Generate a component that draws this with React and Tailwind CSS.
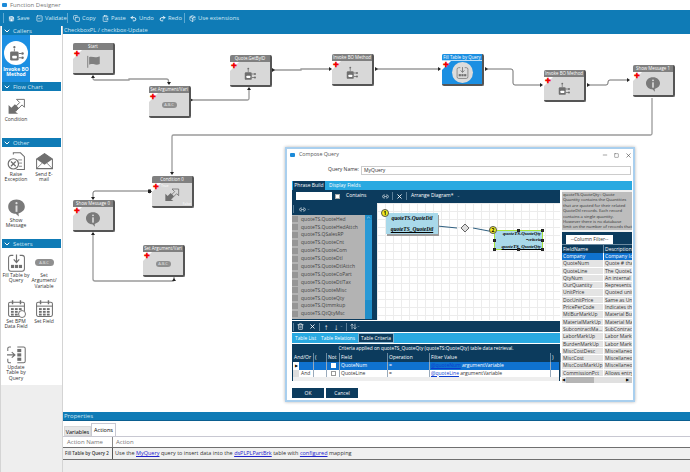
import React from "react";
import { Save, SquareCheck, Copy, ClipboardPaste, Undo2, Redo2, PackageCheck, ChevronDown, Link2, X, ArrowUpDown, Square, Minus, ChevronUp, Trash2 } from "lucide-react";

const G = "#6f6f6f";

function InvokeIcon({ c = G, s = 20 }) {
  return (
    <svg viewBox="0 0 24 24" width={s} height={s}>
      <circle cx="9" cy="3" r="1.6" fill={c} />
      <path d="M9 5v4" stroke={c} strokeWidth="1.2" />
      <rect x="3" y="9" width="12" height="13" rx="2" fill={c} />
      <rect x="6" y="15" width="6.5" height="4" rx="1" fill="#fff" />
      <path d="M15 12h4M15 18h4" stroke={c} strokeWidth="1.4" />
      <circle cx="20.5" cy="12" r="1.8" fill={c} />
      <circle cx="20.5" cy="18" r="1.8" fill={c} />
    </svg>
  );
}
function FlagIcon({ c = "#7f7f7f", s = 20 }) {
  return (
    <svg viewBox="0 0 24 24" width={s} height={s}>
      <rect x="2" y="3" width="1.6" height="19" fill={c} />
      <path d="M5 5c4-2 8 1 12 0 2 0 4-1 5-1v12c-4 2-7 1-10 0-3 0-5 0-7 1z" fill={c} />
    </svg>
  );
}
function InfoIcon({ c = "#7a7a7a", s = 20 }) {
  return (
    <svg viewBox="0 0 24 24" width={s} height={s}>
      <path d="M12 2C5.5 2 1.5 6 1.5 11s4 9 9.5 9l4 3.5-.5-4c4-1.2 8-4 8-8.5 0-5-4.5-9-10.5-9z" fill={c} />
      <circle cx="12" cy="6.5" r="1.4" fill="#ddd" />
      <rect x="10.8" y="9.5" width="2.4" height="8" fill="#ddd" />
    </svg>
  );
}
function CondIcon({ c = G, s = 20 }) {
  return (
    <svg viewBox="0 0 24 24" width={s} height={s}>
      <path d="M12 3h10v10l-3-3-8 8-3-3 8-8z" fill="none" stroke={c} strokeWidth="1.2" />
      <path d="M2 21V10l3.5 3.5L10 9l5 5-4.5 4.5L14 21z" fill={c} />
    </svg>
  );
}
function FillIcon({ c = G, s = 20 }) {
  return (
    <svg viewBox="0 0 24 24" width={s} height={s}>
      <path d="M8 3H5a3 3 0 0 0-3 3v14a3 3 0 0 0 3 3h14a3 3 0 0 0 3-3V6a3 3 0 0 0-3-3h-3" fill="none" stroke={c} strokeWidth="1.3" />
      <path d="M12 2v9M8.500 8l3.500 4 3.500-4" fill="none" stroke={c} strokeWidth="1.5" />
      <rect x="5" y="15" width="4" height="4" fill={c} />
      <rect x="10" y="15" width="4" height="4" fill={c} />
      <rect x="15" y="15" width="4" height="4" fill={c} />
    </svg>
  );
}
function CalIcon({ c = G, s = 20, extra }) {
  return (
    <svg viewBox="0 0 24 24" width={s} height={s}>
      <rect x="2" y="4" width="20" height="18" rx="2" fill="none" stroke={c} strokeWidth="1.3" />
      <path d="M7 1.500v5M17 1.500v5" stroke={c} strokeWidth="1.8" />
      <path d="M2 9h20" stroke={c} strokeWidth="1.3" />
      {[11.5, 15, 18.5].map((y) => [5, 10, 15].map((x) => <rect key={`${x}-${y}`} x={x} y={y} width="3.5" height="2.4" fill={c} />))}
      {extra && <circle cx="19" cy="19" r="4.4" fill="#fff" stroke={c} strokeWidth="1.2" />}
    </svg>
  );
}
function UpdateIcon({ c = G, s = 20 }) {
  return (
    <svg viewBox="0 0 24 24" width={s} height={s}>
      <path d="M5 2.500H3a2 2 0 0 0-2 2v3M5 22.500H3a2 2 0 0 1-2-2v-3M13 2.500h8a2 2 0 0 1 2 2v16a2 2 0 0 1-2 2h-8" fill="none" stroke={c} strokeWidth="1.3" />
      <path d="M0 12.500h9M6 9l4 3.500-4 3.500" fill="none" stroke={c} strokeWidth="1.5" />
      <rect x="13" y="5" width="5" height="4" fill={c} />
      <rect x="13" y="10.5" width="5" height="4" fill={c} />
      <rect x="13" y="16" width="5" height="4" fill={c} />
    </svg>
  );
}
function RaiseIcon({ c = G, s = 20 }) {
  return (
    <svg viewBox="0 0 24 24" width={s} height={s}>
      <path d="M8 3V1h9l5 5v16H12" fill="none" stroke={c} strokeWidth="1.3" />
      <circle cx="8" cy="15" r="6.500" fill="none" stroke={c} strokeWidth="1.5" />
      <path d="M5 12l6 6M11 12l-6 6" stroke={c} strokeWidth="1.6" />
      <path d="M14 10h5M15 14h4M15 18h4" stroke={c} strokeWidth="1" />
    </svg>
  );
}
function MailIcon({ c = G, s = 20 }) {
  return (
    <svg viewBox="0 0 24 24" width={s} height={s}>
      <path d="M12 2L2 9v12h20V9z" fill="none" stroke={c} strokeWidth="1.3" />
      <path d="M12 2L2 9l10 7 10-7z" fill={c} />
      <path d="M2 21l7-7M22 21l-7-7" stroke={c} strokeWidth="1" />
    </svg>
  );
}
function Pill({ w = 15, h = 6, cls = "bg-[#8f8f8f]" }) {
  return (
    <span style={{ width: w, height: h }} className={`${cls} rounded-full flex items-center justify-center text-[#e6e6e6] text-[4px] leading-none`}>A.B.C</span>
  );
}

const nodes = [
  { t: "Start", x: 73, y: 43, i: <FlagIcon s={15} /> },
  { t: "Set Argument/Vari", x: 149, y: 86, i: <Pill /> },
  { t: "Quote.GetByID", x: 230, y: 55, i: <InvokeIcon s={14} /> },
  { t: "Invoke BO Method", x: 332, y: 54, i: <InvokeIcon s={14} /> },
  { t: "Fill Table by Query", x: 442, y: 54, i: <span className="w-[21px] h-[21px] rounded-full bg-[#dcdcdc] flex items-center justify-center"><FillIcon s={13} /></span>, blue: true },
  { t: "Invoke BO Method", x: 544, y: 70, i: <InvokeIcon s={14} /> },
  { t: "Show Message 1", x: 633, y: 65, i: <InfoIcon s={16} /> },
  { t: "Condition 0", x: 152, y: 176, i: <CondIcon s={16} />, cond: true },
  { t: "Show Message 0", x: 73, y: 200, i: <InfoIcon s={16} /> },
  { t: "Set Argument/Vari", x: 143, y: 245, i: <Pill /> },
];

function Node({ n }) {
  return (
    <div style={{ left: n.x - 63, top: n.y - 34 }} className={`absolute w-[42px] h-[32px] rounded-[2px] border-r-2 border-b-2 border-[#555] overflow-hidden flex flex-col ${n.blue ? "bg-[#1b8fe2]" : "bg-[#d8d8d8]"}`}>
      <div className={`h-[7px] shrink-0 text-white text-[4.400px] leading-[7px] text-center whitespace-nowrap ${n.blue ? "bg-[#1b8fe2] border-b border-white/70" : "bg-[#808080]"}`}>{n.t}</div>
      <div className="flex-1 relative flex items-center justify-center">
        <div className="absolute left-0 top-0 w-0 h-0 border-t-[9px] border-r-[9px] border-t-white border-r-transparent" />
        <span className="absolute left-[1px] top-0 text-[#f00000] text-[7px] leading-[7px] font-bold">✚</span>
        {n.i}
        {n.cond && <span className="absolute left-[9px] top-[0px] text-white text-[3.500px] leading-[5px]">True</span>}
        {n.cond && <span className="absolute right-[1px] bottom-[0px] text-white text-[3.500px] leading-[5px]">False</span>}
      </div>
    </div>
  );
}

function Connectors() {
  const thin = { fill: "none", stroke: "#707070", strokeWidth: 1 };
  const thick = { fill: "none", stroke: "#9a9a9a", strokeWidth: 1.3 };
  const R = (x, y) => <path d={`M${x} ${y - 2}l3 2-3 2z`} fill="#222" />;
  const D = (x, y) => <path d={`M${x - 2} ${y}h4l-2 3z`} fill="#222" />;
  const U = (x, y) => <path d={`M${x - 2} ${y}h4l-2 -3z`} fill="#222" />;
  return (
    <svg width="627" height="378" className="absolute left-0 top-0">
      <g transform="translate(-63 -34)">
        <path d="M93 77v1.500q0 1.500 1.500 1.500H129v-1h37.500q2 0 2 2V84" {...thick} />
        <path d="M192 100H247.500q1.500 0 1.500-1.500V89" {...thick} />
        <path d="M274 70h27v-1h28" {...thick} />
        <path d="M377 69h63" {...thick} />
        <path d="M487 69h24q2 0 2 2v12q0 2 2 2h26" {...thin} />
        <path d="M589 85h17q2 0 2-2v-1q0-2 2-2h18" {...thin} />
        <path d="M652 98v35.500q0 1.500-1.500 1.500H173.500q-1.500 0-1.500 1.500V172" {...thick} />
        <path d="M149 191H95q-2 0-2 2v4" {...thin} />
        <path d="M93 233v46q0 2 2 2h78q1 0 1-1v-3" {...thick} />
        {R(272, 70)}{R(329, 69)}{R(375, 69)}{R(438, 69)}{R(485, 69)}{R(540, 85)}{R(587, 85)}{R(627, 80)}{R(190, 100)}
        {D(169, 82)}{D(93, 197)}{D(172, 172)}
        {U(93, 78)}{U(249, 90)}{U(93, 235)}{U(174, 281)}
        <rect x="148" y="189.500" width="3" height="3.500" fill="#222" />
        <path d="M152 191.500l-3-2v4z" fill="#222" />
      </g>
    </svg>
  );
}

const tables = ["QuoteHed", "QuoteHedAttch", "QSalesRP", "QuoteCnt", "QuoteCom", "QuoteDtl", "QuoteDtlAttch", "QuoteCoPart", "QuoteDtlTax", "QuoteMisc", "QuoteQty", "Qtmmkup", "QtQtyMsc"];
const fields = [
  ["Company", "Company Id"], ["QuoteNum", "Quote # that"], ["QuoteLine", "The QuoteL"], ["QtyNum", "An internal"], ["OurQuantity", "Represents"],
  ["UnitPrice", "Quoted unit"], ["DocUnitPrice", "Same as Un"], ["PricePerCode", "Indicates th"], ["MtlBurMarkUp", "Material Bur"], ["MaterialMarkUp", "Material Ma"],
  ["SubcontractMa...", "SubContrac"], ["LaborMarkUp", "Labor Marku"], ["BurdenMarkUp", "Labor Marku"], ["MiscCostDesc", "Miscellaneo"], ["MiscCost", "Miscellaneo"],
  ["MiscCostMarkUp", "Miscellaneo"], ["CommissionPct", "Allows entry"],
];
const desc = ["quoteTS.QuoteQty : Quote", "Quantity contains the Quantities", "that are quoted for their related", "QuoteDtl records. Each record", "contains a single quantity.", "However there is no database", "limit on the number of records that"];

function Handle({ cls }) {
  return <span className={`absolute w-[3px] h-[3px] bg-[#333] border border-[#222] ${cls}`} />;
}
const VBar = () => <span className="w-px h-[8px] bg-[#5b7f99]" />;
const cols = "grid grid-cols-[21px_13px_13px_48px_42px_121px_10px]";

function Dialog() {
  return (
    <div className="absolute left-[222px] top-[113px] w-[350px] h-[255px] bg-white border-2 border-[#a9cfee] flex flex-col text-[#333] shadow-[0_0_3px_rgba(0,0,0,0.3)]">
      <div className="h-[12px] flex items-center pl-[3px] shrink-0 text-[5.300px] text-[#555]">
        <span className="w-[5px] h-[4px] rounded-[1px] bg-[#1c8ad8] mr-[4px]" />Compose Query
        <div className="ml-auto flex items-center gap-[6px] pr-[1px] text-[#444]">
          <Minus size={6} /><Square size={5} /><X size={7} />
        </div>
      </div>
      <div className="h-[20px] shrink-0 flex items-center pl-[41px] pb-[2px] pr-[2px] text-[5px]">
        <span className="w-[33px] whitespace-nowrap">Query Name:</span>
        <div className="flex-1 h-[9px] border border-[#ccc] pl-[2px] leading-[7px]">MyQuery</div>
      </div>
      <div className="ml-[5px] mr-[1px] h-[9px] shrink-0 bg-[#29a9e1] flex text-white text-[5px] leading-[9px] whitespace-nowrap">
        <span className="w-[32px] text-center bg-[#0c3b5d] ml-[1px]">Phrase Build</span>
        <span className="ml-[4px]">Display Fields</span>
      </div>
      <div className="ml-[5px] mr-[1px] flex-1 flex gap-[2px] min-h-0">
        <div className="w-[268px] flex flex-col shrink-0">
          <div className="h-[130px] flex bg-[#0c3b5d] shrink-0">
            <div className="w-[85px] flex flex-col text-white text-[5px]">
              <div className="h-[13px] flex items-center pl-[4px] pb-[1px]">
                <div className="w-[36px] h-[8px] bg-white" />
                <div className="w-[5px] h-[5px] bg-white border border-[#aaa] ml-[3px]" />
                <span className="ml-[6px]">Contains</span>
              </div>
              <div className="h-[12px] flex items-center pl-[1px] gap-[1px]"><VBar /><span className="w-[3px]" /><Link2 size={7} /><ChevronDown size={3} /></div>
              <div className="flex-1 flex min-h-0 pb-[1px]">
                <div className="w-[73px] bg-[#b3b3b3] overflow-hidden pt-[0.500px] text-[#444]">
                  {tables.map((t) => (
                    <div key={t} className="h-[7.900px] flex items-center gap-[3px] text-[5px] whitespace-nowrap">
                      <span className="w-[6px] h-[6px] bg-[#969696] shrink-0" />quoteTS.{t}
                    </div>
                  ))}
                </div>
                <div className="w-[7px] bg-[#1f8ec9] flex flex-col items-center">
                  <ChevronUp size={5} />
                  <div className="w-full h-[80px] bg-[#2a9ad6]" />
                </div>
              </div>
            </div>
            <div className="flex-1 flex flex-col min-w-0">
              <div className="h-[13px] flex items-center pl-[5px] pb-[1px] text-white text-[5px] gap-[3px]">
                <Link2 size={7} /><VBar /><X size={7} strokeWidth={3} /><VBar />
                <span className="ml-[1px]">Arrange Diagram*</span><ChevronDown size={3} />
              </div>
              <div className="flex-1 relative overflow-hidden bg-white bg-[linear-gradient(#ececec_1px,transparent_1px),linear-gradient(90deg,#ececec_1px,transparent_1px)] bg-[length:8px_8px]">
                <svg width="183" height="117" className="absolute left-0 top-0">
                  <path d="M60 23L80 25M96 25L117 29" stroke="#2f5f80" strokeWidth="1" />
                  <path d="M88 21l4 4-4 4-4-4z" fill="#ddd" stroke="#666" />
                </svg>
                <div className="absolute left-[9px] top-[10px] w-[52px] h-[21px] bg-[#a9d9ea] shadow-[1px_2px_0_#9a9a9a] flex flex-col justify-between py-[1px] items-center font-['Liberation_Serif',serif] text-[5.500px] text-black font-bold italic">
                  <span>quoteTS.QuoteDtl</span>
                  <span className="underline">quoteTS_QuoteDtl</span>
                </div>
                <span className="absolute left-[4px] top-[6px] w-[8px] h-[8px] rounded-full bg-[#f2ee20] border border-[#555] text-[5px] leading-[6px] font-bold text-center text-black">1</span>
                <div className="absolute left-[117px] top-[27px] w-[49px] h-[20px] bg-[#a9d9ea] border border-[#a6e23c] flex flex-col items-end font-['Liberation_Serif',serif] text-[5px] text-black font-bold italic leading-[6px] pr-[1px] whitespace-nowrap">
                  <span>quoteTS.QuoteQty</span>
                  <span className="text-[4px] not-italic">=criteria</span>
                  <span className="underline mt-[1px]">quoteTS_QuoteQty</span>
                  <Handle cls="-left-[2px] -top-[2px]" /><Handle cls="left-[22px] -top-[2px]" /><Handle cls="-right-[2px] -top-[2px]" />
                  <Handle cls="-left-[2px] top-[8px]" /><Handle cls="-right-[2px] top-[8px]" />
                  <Handle cls="-left-[2px] -bottom-[2px]" /><Handle cls="left-[22px] -bottom-[2px]" /><Handle cls="-right-[2px] -bottom-[2px]" />
                </div>
                <span className="absolute left-[112px] top-[23px] w-[8px] h-[8px] rounded-full bg-[#f2ee20] border border-[#555] text-[5px] leading-[6px] font-bold text-center text-black">2</span>
              </div>
            </div>
          </div>
          <div className="mt-[1px] h-[11px] bg-[#0c3b5d] flex items-center pl-[1px] text-white shrink-0">
            <VBar /><span className="w-[3px]" /><Trash2 size={7} /><span className="w-[5px]" /><X size={7} strokeWidth={3} /><span className="w-[3px]" /><VBar />
            <span className="text-[8px] leading-none ml-[4px]">↑</span><span className="text-[8px] leading-none ml-[6px]">↓</span><ChevronDown size={3} className="ml-[2px]" />
            <span className="w-[3px]" /><VBar /><ArrowUpDown size={7} className="ml-[3px]" /><ChevronDown size={3} />
          </div>
          <div className="mt-[1px] h-[10px] bg-[#29a9e1] flex text-white text-[4.800px] leading-[10px] shrink-0 whitespace-nowrap">
            <span className="ml-[3px]">Table List</span>
            <span className="ml-[5px]">Table Relations</span>
            <span className="ml-[3px] px-[2px] bg-[#0c3b5d] border border-[#7fb2d0] leading-[8px]">Table Criteria</span>
          </div>
          <div className="mt-[1px] flex-1 flex flex-col bg-[#eee] border-x border-[#0c3b5d] mb-[19px] min-h-0 text-[5px]">
            <div className="h-[9px] bg-[#0c3b5d] text-white text-center leading-[9px] shrink-0 text-[4.800px] whitespace-nowrap">Criteria applied on quoteTS_QuoteQty (quoteTS:QuoteQty) table data retrieval.</div>
            <div className={`h-[9px] bg-[#0c3b5d] text-white ${cols} shrink-0 leading-[9px] [&>span]:border-r [&>span]:border-[#6c8aa0] [&>span]:pl-[1px]`}>
              <span>And/Or</span><span>(</span><span>Not</span><span>Field</span><span>Operation</span><span>Filter Value</span><span>)</span>
            </div>
            <div className={`h-[7.500px] bg-[#0f72cf] text-white ${cols} leading-[7.500px] shrink-0 [&>span]:border-r [&>span]:border-[#9ab]`}>
              <span className="text-black"><span className="inline-block w-[6px] h-full bg-white text-center text-[4px] align-top">▶</span></span><span /><span className="flex items-center justify-center"><i className="w-[5px] h-[5px] bg-white block" /></span><span className="pl-[1px]">QuoteNum</span><span className="pl-[1px]">=</span>
              <span className="pl-[1px] whitespace-nowrap"><u className="text-[#0b3bd0]">@quoteNum</u> argumentVariable</span><span />
            </div>
            <div className={`h-[7.500px] bg-white ${cols} leading-[7.500px] shrink-0 [&>span]:border-r [&>span]:border-[#9ab]`}>
              <span className="flex"><i className="w-[6px] bg-[#ddd] block" /><b className="font-normal pl-[2px]">And</b></span><span /><span className="flex items-center justify-center"><i className="w-[5px] h-[5px] bg-white border border-[#999] block" /></span><span className="pl-[1px]">QuoteLine</span><span className="pl-[1px]">=</span>
              <span className="pl-[1px] whitespace-nowrap"><u className="text-[#0b3bd0]">@quoteLine</u> argumentVariable</span><span />
            </div>
          </div>
        </div>
        <div className="flex-1 flex flex-col min-w-0 pt-[2px] mb-[19px] text-[5px] bg-[#f0f0f0]">
          <div className="h-[38px] bg-[#bdbdbd] text-[#333] text-[4.200px] leading-[5.400px] pl-[1px] shrink-0 whitespace-nowrap">
            {desc.map((d) => <div key={d}>{d}</div>)}
          </div>
          <div className="mt-[2px] h-[12px] bg-[#0c3b5d] flex items-end pl-[4px] shrink-0">
            <span className="w-[47px] h-[9px] bg-white text-[#333] text-center leading-[9px] whitespace-nowrap">--Column Filter--</span>
          </div>
          <div className="h-[9px] bg-[#0c3b5d] text-white grid grid-cols-[42px_1fr] leading-[8px] border-t border-[#6c8aa0] shrink-0">
            <span className="pl-[1px] border-r border-[#6c8aa0]">FieldName</span><span className="pl-[1px] overflow-hidden whitespace-nowrap">Description</span>
          </div>
          <div className="h-[124px] overflow-hidden shrink-0">
            {fields.map((f, i) => (
              <div key={f[0]} className={`h-[7.300px] grid grid-cols-[42px_1fr] leading-[6.500px] whitespace-nowrap ${i === 0 ? "bg-[#0f72cf] text-white" : "bg-[#e4e4e4] border-b border-white"}`}>
                <span className="pl-[1px] border-r border-white overflow-hidden">{f[0]}</span><span className="pl-[1px] overflow-hidden">{f[1]}</span>
              </div>
            ))}
          </div>
          <div className="h-[6px] bg-[#e0e0e0] flex items-center shrink-0 leading-[6px]">
            <span className="w-[4px] text-[3.500px] text-black">◀</span>
            <span className="w-[28px] h-full bg-[#b5b5b5]" />
            <span className="ml-auto w-[6px] h-full bg-[#ccc] text-[3.500px] text-black">▶</span>
          </div>
        </div>
      </div>
      <div className="absolute left-[5px] bottom-[2px] flex gap-[2px] text-white text-[5px] leading-[10px] text-center">
        <span className="w-[32px] h-[10px] bg-[#0c3b5d]">OK</span>
        <span className="w-[32px] h-[10px] bg-[#0c3b5d]">Cancel</span>
      </div>
    </div>
  );
}

function SideHead({ children }) {
  return (
    <div className="h-[9px] mx-[1px] bg-[#0f7bb6] flex items-center pl-[1px] gap-[2px] text-[6px] text-[#cfe6f3] leading-none">
      <ChevronDown size={8} strokeWidth={3} className="text-white" />{children}
    </div>
  );
}
function Tool({ icon, label, h, active }) {
  return (
    <div className={`w-[28px] flex flex-col items-center text-center text-[5px] leading-[5.300px] ${h} ${active ? "bg-[#1b8fe2] text-white font-bold" : "text-[#333]"}`}>
      {icon}
      <span className="mt-[1px]">{label}</span>
    </div>
  );
}
const Bar = () => <span className="w-px h-[10px] bg-[#5ea9d2]" />;

function TB({ icon, label, cls }) {
  return <span className={`flex items-center gap-[2px] whitespace-nowrap ${cls}`}>{icon}{label}</span>;
}

export default function App() {
  return (
    <div className="w-[690px] h-[472px] overflow-hidden bg-white flex flex-col font-['Open_Sans',sans-serif]">
      <div className="h-[10px] flex items-center pl-[2px] text-[6px] text-[#777] shrink-0">
        <span className="w-[5px] h-[4px] rounded-[1px] bg-[#1c8ad8] mr-[3px]" />Function Designer
      </div>
      <div className="h-[16px] bg-[#0f7bb6] flex items-center pl-[3px] text-[5.800px] text-[#d3e8f4] shrink-0">
        <Bar />
        <TB cls="ml-[4px] w-[28px]" icon={<Save size={7} className="text-white" fill="#fff" stroke="#0f7bb6" />} label="Save" />
        <TB cls="w-[31px]" icon={<SquareCheck size={7} className="text-white" />} label="Validate" />
        <Bar />
        <TB cls="ml-[5px] w-[29px]" icon={<Copy size={7} className="text-white" />} label="Copy" />
        <TB cls="w-[28px]" icon={<ClipboardPaste size={7} className="text-white" />} label="Paste" />
        <TB cls="w-[29px]" icon={<Undo2 size={7} className="text-white" strokeWidth={3} />} label="Undo" />
        <TB cls="w-[25px]" icon={<Redo2 size={7} className="text-white" strokeWidth={3} />} label="Redo" />
        <Bar />
        <TB cls="ml-[4px]" icon={<PackageCheck size={7} className="text-white" />} label="Use extensions" />
      </div>
      <div className="flex-1 flex min-h-0">
        <div className="w-[63px] shrink-0 flex flex-col border-x border-x-[#d4d4d4] bg-[#eee]">
          <div className="h-[359px] bg-white">
            <SideHead>Callers</SideHead>
            <div className="h-[47px] mx-[1px] flex">
              <Tool active h="h-[47px]" label="Invoke BO Method" icon={<span className="mt-[6px] mb-[1px] w-[24px] h-[24px] rounded-full bg-white flex items-center justify-center"><InvokeIcon s={17} /></span>} />
            </div>
            <SideHead>Flow Chart</SideHead>
            <div className="h-[47px] mx-[1px] pt-[6px]">
              <Tool h="" label="Condition" icon={<CondIcon s={19} />} />
            </div>
            <SideHead>Other</SideHead>
            <div className="mx-[1px] grid grid-cols-[28px_28px] h-[92px] pt-[5px] auto-rows-[46px]">
              <Tool h="" label="Raise Exception" icon={<RaiseIcon s={19} />} />
              <Tool h="" label={<>Send E-<br />mail</>} icon={<MailIcon s={19} />} />
              <Tool h="" label="Show Message" icon={<InfoIcon s={19} />} />
            </div>
            <SideHead>Setters</SideHead>
            <div className="mx-[1px] grid grid-cols-[28px_28px] pt-[5px] auto-rows-[46px]">
              <Tool h="" label="Fill Table by Query" icon={<FillIcon s={19} />} />
              <Tool h="" label="Set Argument/ Variable" icon={<span className="h-[19px] flex items-center"><Pill w={19} h={7} /></span>} />
              <Tool h="" label="Set BPM Data Field" icon={<CalIcon s={19} extra />} />
              <Tool h="" label="Set Field" icon={<CalIcon s={19} />} />
              <Tool h="" label="Update Table by Query" icon={<UpdateIcon s={19} />} />
            </div>
          </div>
        </div>
        <div className="flex-1 flex flex-col min-w-0">
          <div className="h-[8px] bg-[#0f7bb6] pl-[1px] text-[5.700px] leading-[8px] text-[#cfe6f3] shrink-0">CheckboxPL / checkbox-Update</div>
          <div className="h-[378px] relative overflow-hidden shrink-0 bg-white">
            <Connectors />
            {nodes.map((n, i) => <Node key={i} n={n} />)}
            <Dialog />
          </div>
          <div className="h-[9px] mt-0 bg-[#0f7bb6] border-b border-[#0b5f90] pl-[1px] text-[6px] leading-[9px] text-[#cfe6f3] shrink-0">Properties</div>
          <div className="flex-1 flex flex-col text-[5.500px] min-h-0">
            <div className="h-[16px] flex items-end pl-[1px] border-b border-[#c8c8d2] shrink-0">
              <span className="h-[10px] w-[27px] bg-[#e6e6e6] text-center leading-[10px] border border-[#d8d8d8]">Variables</span>
              <span className="h-[13px] w-[25px] bg-white text-center leading-[12px] border border-b-0 border-[#c8c8d2]">Actions</span>
            </div>
            <div className="h-[10px] flex text-[#777] text-[6px] leading-[10px] shrink-0 bg-white">
              <span className="w-[50px] pl-[4px] border-r border-[#888]">Action Name</span>
              <span className="pl-[3px]">Action</span>
            </div>
            <div className="h-[13px] flex leading-[11px] shrink-0 bg-[#f0f0f0] border-y border-y-[#6f6f6f] text-[#333]">
              <span className="w-[50px] shrink-0 pl-[2px] text-[4.500px] font-semibold whitespace-nowrap overflow-hidden border-r border-[#555]">Fill Table by Query 2</span>
              <span className="pl-[2px] whitespace-nowrap">Use the <u className="text-[#2222cc]">MyQuery</u> query to insert data into the <u className="text-[#2222cc]">dsPLPLPartBrk</u> table with <u className="text-[#2222cc]">configured</u> mapping</span>
            </div>
            <div className="flex-1 bg-[#eee]" />
          </div>
        </div>
      </div>
    </div>
  );
}
